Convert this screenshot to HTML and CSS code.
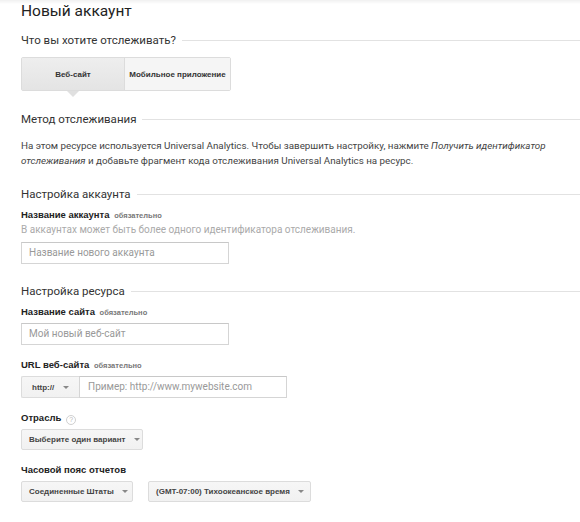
FILE: index.html
```
<!DOCTYPE html>
<html lang="ru">
<head>
    <meta charset="UTF-8">
    <title>Новый аккаунт</title>
    <link rel="stylesheet" href="styles.css">
</head>
<body>
    <div class="topshade"></div>
    <div class="page">
        <h1 class="title">Новый аккаунт</h1>

        <h2 class="sect">Что вы хотите отслеживать?</h2>
        <div class="toggle">
            <div class="tbtn active">Веб-сайт</div>
            <div class="tbtn">Мобильное приложение</div>
        </div>

        <h2 class="sect sect-method">Метод отслеживания</h2>
        <p class="info">На этом ресурсе используется Universal Analytics. Чтобы завершить настройку, нажмите <i>Получить идентификатор отслеживания</i> и добавьте фрагмент кода отслеживания Universal Analytics на ресурс.</p>

        <h2 class="sect sect-acc">Настройка аккаунта</h2>
        <div class="field first">
            <div class="label">Название аккаунта <span class="req">обязательно</span></div>
            <div class="hint">В аккаунтах может быть более одного идентификатора отслеживания.</div>
            <div class="input w208">Название нового аккаунта</div>
        </div>

        <h2 class="sect sect-res">Настройка ресурса</h2>
        <div class="field first">
            <div class="label">Название сайта <span class="req">обязательно</span></div>
            <div class="input w208">Мой новый веб-сайт</div>
        </div>
        <div class="field">
            <div class="label">URL веб-сайта <span class="req">обязательно</span></div>
            <div class="urlrow">
                <div class="select proto">http://<span class="caret"></span></div>
                <div class="input url">Пример: http://www.mywebsite.com</div>
            </div>
        </div>
        <div class="field">
            <div class="label">Отрасль<span class="help">?</span></div>
            <div class="select wide">Выберите один вариант<span class="caret"></span></div>
        </div>
        <div class="field">
            <div class="label">Часовой пояс отчетов</div>
            <div class="selrow">
                <div class="select country">Соединенные Штаты<span class="caret"></span></div>
                <div class="select zone">(GMT-07:00) Тихоокеанское время<span class="caret"></span></div>
            </div>
        </div>
    </div>
</body>
</html>
```
FILE: styles.css
```
*{
    padding: 0;
    margin: 0;
    box-sizing: border-box;
}
body{
    background: #fff;
    font-family: Roboto, "Liberation Sans", sans-serif;
    color: #333;
}
.topshade{
    position: fixed;
    left: 0;
    top: 0;
    right: 0;
    height: 4px;
    background: linear-gradient(rgba(0,0,0,0.06), rgba(0,0,0,0));
}
.page{
    padding-left: 21px;
}
.title{
    font-size: 15.5px;
    font-weight: normal;
    line-height: 22px;
    color: #222;
}
.sect{
    display: flex;
    align-items: center;
    font-size: 11.5px;
    font-weight: normal;
    line-height: 16px;
    color: #333;
    margin-top: 10px;
}
.sect::after{
    content: "";
    flex: 1;
    height: 1px;
    background: #e2e2e2;
    margin-left: 6px;
}
.sect-method{
    margin-top: 20px;
}
.sect-acc{
    margin-top: 18px;
}
.sect-res{
    margin-top: 19px;
}
.toggle{
    display: flex;
    width: 210px;
    height: 34px;
    margin-top: 9px;
    border: 1px solid #dcdcdc;
    border-radius: 2px;
    font-family: "Liberation Sans", Arial, sans-serif;
    font-size: 8px;
    font-weight: bold;
    color: #333;
    white-space: nowrap;
}
.tbtn{
    display: flex;
    align-items: center;
    justify-content: center;
    background: #f5f5f5;
}
.tbtn:first-child{
    width: 103px;
    border-right: 1px solid #dcdcdc;
}
.tbtn:last-child{
    flex: 1;
}
.tbtn.active{
    position: relative;
    background: linear-gradient(#eeeeee, #e4e4e4);
}
.tbtn.active::after{
    content: "";
    position: absolute;
    left: 50%;
    bottom: -7px;
    margin-left: -6px;
    border-left: 6px solid transparent;
    border-right: 6px solid transparent;
    border-top: 6px solid #e0e0e0;
}
.info{
    margin-top: 11px;
    font-size: 9.8px;
    line-height: 15px;
    color: #444;
    padding-right: 20px;
}
.field{
    margin-top: 13px;
}
.field.first{
    margin-top: 6px;
}
.label{
    font-family: "Liberation Sans", Arial, sans-serif;
    font-size: 9.5px;
    font-weight: bold;
    line-height: 14px;
    color: #222;
}
.req{
    font-size: 7.5px;
    color: #777;
    margin-left: 2px;
}
.help{
    display: inline-block;
    width: 10px;
    height: 10px;
    border: 1px solid #d0d0d0;
    border-radius: 50%;
    font-size: 7px;
    line-height: 8px;
    text-align: center;
    color: #bbb;
    font-weight: normal;
    margin-left: 5px;
    vertical-align: -1px;
}
.hint{
    font-size: 10px;
    line-height: 14px;
    color: #aaa;
}
.input{
    height: 22px;
    margin-top: 3px;
    border: 1px solid #d5d5d5;
    border-top-color: #c8c8c8;
    padding-left: 7px;
    font-size: 10px;
    line-height: 20px;
    color: #999;
}
.w208{
    width: 208px;
}
.hint + .input{
    margin-top: 5px;
}
.urlrow{
    display: flex;
    margin-top: 3px;
}
.urlrow .input{
    margin-top: 0;
}
.url{
    width: 208px;
    padding-left: 8px;
}
.select{
    display: flex;
    align-items: center;
    height: 21px;
    margin-top: 4px;
    padding: 0 6px 0 7px;
    border: 1px solid #dcdcdc;
    border-radius: 2px;
    background: linear-gradient(#f6f6f6, #f1f1f1);
    font-family: "Liberation Sans", Arial, sans-serif;
    font-size: 8px;
    font-weight: bold;
    color: #444;
    white-space: nowrap;
}
.wide{
    width: 122px;
}
.proto{
    margin-top: 0;
    width: 58px;
    height: 22px;
    padding: 0 10px;
    border-radius: 2px 0 0 2px;
    border-right: 0;
}
.caret{
    margin-left: auto;
    padding-left: 8px;
}
.caret::before{
    content: "";
    display: block;
    border-left: 3px solid transparent;
    border-right: 3px solid transparent;
    border-top: 3px solid #888;
}
.selrow{
    display: flex;
    gap: 15px;
    margin-top: 4px;
}
.selrow .select{
    margin-top: 0;
}
.country{
    width: 112px;
}
.zone{
    width: 163px;
}
```
